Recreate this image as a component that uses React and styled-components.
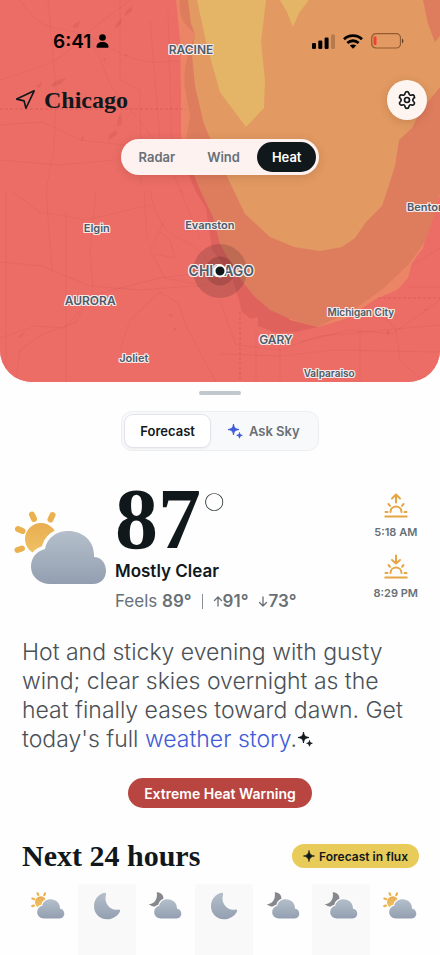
import React, { useState } from "react";
import styled, { createGlobalStyle } from "styled-components";
import { Navigation, Settings } from "lucide-react";

const sans = `Inter, "Open Sans", sans-serif`;
const serif = `"Liberation Serif", serif`;

const GlobalStyle = createGlobalStyle`
  * {
    box-sizing: border-box;
  }
  body {
    margin: 0;
    background: #fefefe;
    color: #11181c;
    font-family: ${sans};
  }
  button {
    font-family: inherit;
    border: 0;
    cursor: pointer;
  }
`;

// styled-components
const Page = styled.div`
  display: flex;
  flex-direction: column;
  height: 100vh;
  overflow: hidden;
`;

const MapPanel = styled.header`
  position: relative;
  flex: none;
  height: 40vh;
  min-height: 340px;
  overflow: hidden;
  background: #eb6d66;
  border-radius: 0 0 32px 32px;
`;

const MapArt = styled.svg`
  position: absolute;
  inset: 0;
  width: 100%;
  height: 100%;
`;

const MapControls = styled.div`
  position: relative;
  display: flex;
  flex-direction: column;
`;

const StatusBar = styled.div`
  display: flex;
  justify-content: space-between;
  align-items: center;
  height: 80px;
  padding: 2px 36px 0 53px;
  color: #000;
`;

const StatusGroup = styled.div`
  display: flex;
  align-items: center;
  gap: ${(props) => props.$gap}px;
`;

const Clock = styled.time`
  font-size: 19px;
  font-weight: 600;
`;

const PlaceBar = styled.div`
  display: flex;
  justify-content: space-between;
  align-items: center;
  height: 40px;
  padding: 0 13px 0 14px;
`;

const Place = styled.h1`
  display: flex;
  align-items: center;
  gap: 8px;
  margin: 0;
  font-family: ${serif};
  font-size: 24px;
  line-height: 28px;
  font-weight: 700;
`;

const RoundButton = styled.button`
  display: flex;
  align-items: center;
  justify-content: center;
  width: 40px;
  height: 40px;
  padding: 0;
  border-radius: 50%;
  background: #fef5f0;
  color: #11181c;
  box-shadow: 0 2px 10px rgba(90, 40, 20, 0.2);
`;

const LayerSwitch = styled.div`
  display: flex;
  align-self: center;
  gap: 2px;
  margin-top: 19px;
  padding: 3px;
  border-radius: 19px;
  background: #fdf2f0;
  box-shadow: 0 2px 10px rgba(90, 40, 20, 0.18);
`;

const LayerButton = styled.button`
  height: 30px;
  padding: 0 15px;
  border-radius: 15px;
  font-size: 13px;
  font-weight: 600;
  background: ${(props) => (props.$active ? "#11181c" : "transparent")};
  color: ${(props) => (props.$active ? "#fff" : "#687076")};
`;

const CityLabel = styled.span`
  position: absolute;
  left: ${(props) => props.$x}%;
  top: ${(props) => props.$y}%;
  transform: translate(-50%, -50%);
  font-size: ${(props) => props.$size || 11}px;
  font-weight: 600;
  white-space: nowrap;
  color: #4a5b6a;
  text-shadow: 1px 0 #fbe9e6, -1px 0 #fbe9e6, 0 1px #fbe9e6, 0 -1px #fbe9e6,
    1px 1px #fbe9e6, -1px -1px #fbe9e6, 1px -1px #fbe9e6, -1px 1px #fbe9e6;
`;

const Halo = styled.span`
  position: absolute;
  left: 50%;
  top: 71%;
  width: 54px;
  height: 54px;
  border-radius: 50%;
  transform: translate(-50%, -50%);
  background: radial-gradient(
    circle,
    rgba(70, 30, 30, 0.38) 0 14px,
    rgba(80, 40, 40, 0.22) 15px
  );
`;

const Dot = styled.span`
  position: absolute;
  left: 50%;
  top: 71%;
  width: 13px;
  height: 13px;
  border: 2px solid #fff;
  border-radius: 50%;
  transform: translate(-50%, -50%);
  background: #11181c;
`;

const Sheet = styled.main`
  flex: 1;
  display: flex;
  flex-direction: column;
`;

const Handle = styled.div`
  align-self: center;
  width: 42px;
  height: 4px;
  margin-top: 9px;
  border-radius: 2px;
  background: #c1c8cd;
`;

const Tabs = styled.div`
  display: flex;
  align-self: center;
  gap: 2px;
  margin-top: 16px;
  padding: 3px;
  border: 1px solid #eceef0;
  border-radius: 11px;
  background: #f8f9fa;
`;

const Tab = styled.button`
  display: flex;
  align-items: center;
  gap: 6px;
  height: 32px;
  padding: 0 15px;
  border-radius: 8px;
  font-size: 13px;
  font-weight: 600;
  background: ${(props) => (props.$active ? "#fff" : "transparent")};
  color: ${(props) => (props.$active ? "#11181c" : "#687076")};
  box-shadow: ${(props) =>
    props.$active ? "0 0 0 1px #e2e4ea, 0 1px 3px rgba(0, 0, 0, 0.1)" : "none"};
`;

const Current = styled.section`
  display: flex;
  margin-top: 31px;
  padding: 0 22px 0 14px;
`;

const MainIcon = styled.div`
  width: 94px;
  padding-top: 29px;
`;

const Reading = styled.div`
  flex: 1;
  padding-left: 7px;
`;

const Temperature = styled.div`
  display: flex;
  align-items: flex-start;
  font-family: ${serif};
  font-size: 86px;
  line-height: 74px;
  font-weight: 700;
`;

const Degree = styled.span`
  font-family: Lato, sans-serif;
  font-size: 64px;
  line-height: 66px;
  font-weight: 100;
`;

const Condition = styled.h2`
  margin: 3px 0 0;
  font-size: 17px;
  line-height: 24px;
  font-weight: 600;
`;

const Details = styled.div`
  display: flex;
  align-items: center;
  gap: 10px;
  margin-top: 6px;
  font-size: 17px;
  line-height: 24px;
  color: #687076;
`;

const Strong = styled.b`
  display: inline-flex;
  align-items: center;
  font-weight: 600;
`;

const Divider = styled.span`
  width: 1px;
  height: 15px;
  background: #889096;
`;

const SunTimes = styled.div`
  display: flex;
  flex-direction: column;
  align-items: center;
  gap: 13px;
  padding-top: 11px;
`;

const SunTime = styled.div`
  display: flex;
  flex-direction: column;
  align-items: center;
  gap: 6px;
  font-size: 11px;
  line-height: 17px;
  font-weight: 600;
  color: #687076;
`;

const Summary = styled.p`
  margin: 25px 22px 0;
  font-size: 23px;
  line-height: 29px;
  font-weight: 300;
  color: #4a5156;
`;

const StoryLink = styled.a`
  color: #3e5bd8;
  text-decoration: none;
`;

const Warning = styled.button`
  align-self: center;
  height: 30px;
  margin-top: 24px;
  padding: 0 16px;
  border-radius: 15px;
  background: #b94540;
  color: #fff;
  font-size: 14px;
  font-weight: 600;
`;

const HoursHeader = styled.div`
  display: flex;
  justify-content: space-between;
  align-items: center;
  height: 34px;
  margin-top: 31px;
  padding: 0 21px 0 22px;
`;

const HoursTitle = styled.h2`
  margin: 0;
  font-family: ${serif};
  font-size: 30px;
  line-height: 34px;
  font-weight: 700;
`;

const FluxBadge = styled.button`
  display: flex;
  align-items: center;
  gap: 4px;
  height: 24px;
  padding: 0 11px;
  border-radius: 12px;
  background: #e9cb59;
  color: #11181c;
  font-size: 12px;
  font-weight: 600;
`;

const Hours = styled.div`
  flex: 1;
  display: grid;
  grid-template-columns: repeat(7, 1fr);
  margin-top: 11px;
  padding: 0 11px 0 19px;
`;

const Hour = styled.div`
  display: flex;
  justify-content: center;
  align-items: flex-start;
  padding-top: 8px;
  border-radius: 3px 3px 0 0;
  background: ${(props) => (props.$shaded ? "#f9f9f9" : "transparent")};
`;

const cities = [
  { name: "RACINE", x: 43.4, y: 12.7, size: 12 },
  { name: "Elgin", x: 22, y: 59.8 },
  { name: "Evanston", x: 47.7, y: 58.9 },
  { name: "AURORA", x: 20.5, y: 78.5, size: 12 },
  { name: "Joliet", x: 30.4, y: 93.7 },
  { name: "GARY", x: 62.7, y: 88.8, size: 12 },
  { name: "Michigan City", x: 82, y: 81.8, size: 10 },
  { name: "Valparaiso", x: 74.8, y: 97.6, size: 10 },
  { name: "Benton", x: 96.8, y: 54.3 },
  { name: "CHICAGO", x: 50.3, y: 70.6, size: 14 },
];

const hours = ["sun", "moon", "moonCloud", "moon", "moonCloud", "moonCloud", "sun"];

function HeatMap() {
  return (
    <MapArt viewBox="0 0 440 382" preserveAspectRatio="xMidYMid slice" aria-hidden="true">
      <rect width="440" height="382" fill="#eb6d66" />
      <path
        fill="#df625d"
        d="M181 138L186 168L196 192L206 208L212 250L230 272L239 300L242 312L251 319L258 317L258 326L276 333L296 332L318 327L270 270L210 160Z"
      />
      <path
        fill="#eb8565"
        d="M176 0L180 40L181 90L181 136L186 158L230 230L290 320L318 327L345 319L376 299L397 290L408 278L412 263L423 248L430 220L440 196V0Z"
      />
      <path
        fill="#de7d5e"
        d="M180 0Q178 18 187 26L195 34L188 54Q182 74 186 94L190 116L186 140L188 160L200 190L213 217L220 244L238 276L254 296L270 310L290 319L317 327L352 311L384 288L409 264L426 240L434 216L440 192V0Z"
      />
      <path
        fill="#e29a62"
        d="M188 0L191 24L195 34L192 54L195 86L204 124L222 166L245 214L270 237L294 247L320 251L342 247L355 238L366 222L382 206L388 188L395 166L399 140L412 128L420 112L440 87V36L435 42L428 24L423 0Z"
      />
      <path fill="#e4b566" d="M197 0L207 46L220 92L246 127L264 108L265 80L261 42L266 0Z" />
      <path fill="#e4b566" d="M280 0L287 12L293 27L299 13L309 0Z" />
      <g fill="none" stroke="#b84743" strokeOpacity="0.13" strokeWidth="1">
        <path d="M0 80C30 70 55 65 75 45S105 20 130 0M20 0C40 30 55 28 76 32S112 54 140 60S166 58 180 62" />
        <path d="M48 0L56 90L54 150L46 190L52 270M90 40Q101 58 106 74T130 110T160 150T184 196" />
        <path d="M0 125L42 122L80 140L124 145L180 170M0 160L60 165L115 160M10 190L40 212L86 220L150 205" />
        <path d="M120 0V80L140 90L141 185M150 20L160 140M168 10L172 160" />
        <path d="M0 262L42 266L90 286L140 290L208 285M6 192V382M66 212V382M144 190L147 240" />
        <path d="M96 192L90 250L93 290L76 322L43 334L20 350L16 382M150 190Q158 232 182 240T216 280" />
        <path d="M0 338L36 326L65 328L93 295L160 278L205 272M120 350L130 320L160 292L178 303L188 330L216 382" />
        <path d="M165 220L150 250L165 278L196 284M160 232L170 240L175 258L155 254M180 190L200 238" />
        <path d="M220 300L236 345L280 350L320 336L440 325M220 354L280 356L334 350L440 352M256 330V382M280 340V382M360 330V382" />
        <path d="M380 310L396 330L400 360L424 382M300 342L350 330L392 334L440 300M414 264L440 248M408 287H440" />
        <path strokeDasharray="3 2" strokeOpacity="0.35" d="M0 109H186M240 312V382M378 298H440" />
      </g>
      <g fill="#b84743" fillOpacity="0.22">
        <path d="M127 10L133 6L131 12L124 16ZM117 22L122 18L121 24L115 29ZM74 24L80 21L78 27L73 28ZM52 84L58 80L66 78L61 84L52 87ZM36 86L42 82L40 88Z" />
        <path d="M118 117L121 113L122 124L117 127ZM110 134L116 130L117 135L108 140ZM81 138L84 135L82 142ZM103 58L106 58L104 62ZM124 55L128 54L126 57Z" />
        <path d="M19 336L25 332L23 335L19 338ZM168 314L173 315L172 317ZM387 330L390 332L387 335ZM174 328L177 328L175 331ZM424 309L428 309L425 311Z" />
      </g>
    </MapArt>
  );
}

function Sparkles({ size, color }) {
  return (
    <svg width={size} height={size} viewBox="0 0 16 16" fill={color} aria-hidden="true">
      <path d="M6.5 1C7 4.700 8 5.800 12 6.500C8 7.200 7 8.300 6.500 12C6 8.300 5 7.200 1 6.500C5 5.800 6 4.700 6.500 1Z" stroke={color} strokeLinejoin="round" />
      <path d="M12.500 9.500C12.800 11.300 13.300 11.900 15.300 12.300C13.300 12.700 12.800 13.300 12.500 15.200C12.200 13.300 11.700 12.700 9.700 12.300C11.700 11.900 12.200 11.300 12.500 9.500Z" stroke={color} strokeLinejoin="round" strokeWidth="0.8" />
    </svg>
  );
}

function SunIcon({ down }) {
  return (
    <svg width="24" height="25" viewBox="0 0 24 25" fill="none" stroke="#e6a545" strokeWidth="2" strokeLinecap="round" strokeLinejoin="round" aria-hidden="true">
      <path d={down ? "M12 1.500V9M8 6L12 9.500L16 6" : "M12 9.500V2M8 5.500L12 1.500L16 5.500"} />
      <path d="M6.500 19C6.500 11.800 17.500 11.800 17.500 19" />
      <path d="M1.500 19H3.500M20.500 19H22.500M4.500 11L6 12.800M19.500 11L18 12.800" />
      <path d="M0.500 23.500H23.500" strokeLinecap="butt" />
    </svg>
  );
}

const CLOUD =
  "M36 73C26 73 17 66 17 56C17 46 23 40 31 38C33 27 42 20 54 20C69 20 80 30 80 44V46C87 46 92 52 92 60C92 67 87 73 79 73Z";

function WeatherIcon({ kind, width }) {
  const id = "sky-" + kind + width;
  return (
    <svg width={width} viewBox="0 0 94 75" aria-hidden="true">
      <defs>
        <linearGradient id={id + "-cloud"} x1="0" y1="0" x2="0" y2="1">
          <stop offset="0" stopColor="#b5bfcb" />
          <stop offset="1" stopColor="#939fb1" />
        </linearGradient>
        <linearGradient id={id + "-sun"} x1="0" y1="0" x2="0" y2="1">
          <stop offset="0" stopColor="#e9ad51" />
          <stop offset="1" stopColor="#efc364" />
        </linearGradient>
      </defs>
      {kind === "sun" && (
        <>
          <circle cx="27" cy="28" r="16" fill={`url(#${id}-sun)`} />
          <path stroke="#ebb14f" strokeWidth="6" strokeLinecap="round" d="M18 3.500L20 8M38.500 4L36.500 8.500M4 18L8.500 20M3.500 39L8 37.500" />
        </>
      )}
      {kind === "moonCloud" && (
        <path fill="#85888f" d="M24 1C36 0 46 11 42 24C37 40 17 46 2 34C17 34 28 20 24 1Z" />
      )}
      <path d={CLOUD} fill="#fefefe" stroke="#fefefe" strokeWidth="7" />
      <path d={CLOUD} fill={`url(#${id}-cloud)`} />
    </svg>
  );
}

function MoonIcon() {
  return (
    <svg width="28" height="28" viewBox="0 0 28 28" aria-hidden="true">
      <defs>
        <linearGradient id="moon" x1="0" y1="0" x2="0" y2="1">
          <stop offset="0" stopColor="#b5bfcb" />
          <stop offset="1" stopColor="#939fb1" />
        </linearGradient>
      </defs>
      <path
        fill="url(#moon)"
        d="M9.500 1.300C12 0 13.800 0.700 13 2.800C10.500 11 17 19 25 17.700C27.300 17.300 27.800 18.500 26.600 20.200C23.500 25 19 27.300 14 27.300C6.500 27.300 1 21.700 1 14.300C1 8.300 4.500 3.500 9.500 1.300Z"
      />
    </svg>
  );
}

function Arrow({ down }) {
  return (
    <svg width="10" height="11" viewBox="0 0 10 11" fill="none" stroke="#687076" strokeWidth="1.300" strokeLinecap="round" strokeLinejoin="round" aria-hidden="true">
      <path d={down ? "M5 1V10M1.500 6.500L5 10L8.500 6.500" : "M5 10V1M1.500 4.500L5 1L8.500 4.500"} />
    </svg>
  );
}

function StatusIcons() {
  return (
    <StatusGroup $gap={8}>
      <svg width="23" height="15" viewBox="0 0 23 15" aria-hidden="true">
        <rect x="0" y="9" width="4" height="6" rx="1.200" />
        <rect x="6.300" y="6.500" width="4" height="8.500" rx="1.200" />
        <rect x="12.600" y="3.500" width="4" height="11.500" rx="1.200" />
        <rect x="19" y="0.500" width="4" height="14.500" rx="1.200" opacity="0.2" />
      </svg>
      <svg width="20" height="15" viewBox="0 0 20 15" fill="none" stroke="#000" strokeWidth="2.800" aria-hidden="true">
        <path d="M1 5.200C6 0.500 14 0.500 19 5.200" />
        <path d="M4.400 9C7.600 6 12.400 6 15.600 9" />
        <path d="M10 14.800L6.800 11.600C8.600 10 11.400 10 13.200 11.600Z" fill="#000" stroke="none" />
      </svg>
      <svg width="33" height="16" viewBox="0 0 33 16" aria-hidden="true">
        <rect x="0.700" y="0.700" width="28.800" height="14.300" rx="4.300" fill="none" stroke="#5c3010" strokeOpacity="0.6" strokeWidth="1.200" />
        <rect x="2.500" y="3.500" width="3" height="8.500" rx="1" fill="#ee4238" />
        <path d="M31 5.500C32.800 6.200 32.800 9.600 31 10.300Z" fillOpacity="0.6" />
      </svg>
    </StatusGroup>
  );
}

export default function App() {
  const [layer, setLayer] = useState("Heat");
  const [tab, setTab] = useState("Forecast");

  return (
    <Page>
      <GlobalStyle />
      <MapPanel>
        <HeatMap />
        <Halo />
        {cities.map((city) => (
          <CityLabel key={city.name} $x={city.x} $y={city.y} $size={city.size}>
            {city.name}
          </CityLabel>
        ))}
        <Dot />
        <MapControls>
          <StatusBar>
            <StatusGroup $gap={5}>
              <Clock>6:41</Clock>
              <svg width="13" height="14" viewBox="0 0 13 14" aria-hidden="true">
                <circle cx="6.500" cy="3.500" r="3.300" />
                <path d="M0.500 13C0.500 9.500 3 8 6.500 8S12.500 9.500 12.500 13Q12.500 13.700 11.800 13.700H1.200Q0.500 13.700 0.500 13Z" />
              </svg>
            </StatusGroup>
            <StatusIcons />
          </StatusBar>
          <PlaceBar>
            <Place>
              <Navigation size={22} strokeWidth={1.8} />
              Chicago
            </Place>
            <RoundButton type="button" aria-label="Settings">
              <Settings size={20} strokeWidth={2} />
            </RoundButton>
          </PlaceBar>
          <LayerSwitch>
            {["Radar", "Wind", "Heat"].map((name) => (
              <LayerButton key={name} type="button" $active={layer === name} onClick={() => setLayer(name)}>
                {name}
              </LayerButton>
            ))}
          </LayerSwitch>
        </MapControls>
      </MapPanel>

      <Sheet>
        <Handle />
        <Tabs>
          <Tab type="button" $active={tab === "Forecast"} onClick={() => setTab("Forecast")}>
            Forecast
          </Tab>
          <Tab type="button" $active={tab === "Ask Sky"} onClick={() => setTab("Ask Sky")}>
            <Sparkles size={16} color="#3e5bd8" />
            Ask Sky
          </Tab>
        </Tabs>

        <Current>
          <MainIcon>
            <WeatherIcon kind="sun" width={94} />
          </MainIcon>
          <Reading>
            <Temperature>
              87<Degree>°</Degree>
            </Temperature>
            <Condition>Mostly Clear</Condition>
            <Details>
              <span>
                Feels <Strong>89°</Strong>
              </span>
              <Divider />
              <Strong>
                <Arrow />
                91°
              </Strong>
              <Strong>
                <Arrow down />
                73°
              </Strong>
            </Details>
          </Reading>
          <SunTimes>
            <SunTime>
              <SunIcon />
              5:18 AM
            </SunTime>
            <SunTime>
              <SunIcon down />
              8:29 PM
            </SunTime>
          </SunTimes>
        </Current>

        <Summary>
          Hot and sticky evening with gusty wind; clear skies overnight as the
          heat finally eases toward dawn. Get today's full{" "}
          <StoryLink href="#story">weather story</StoryLink>.
          <Sparkles size={16} color="#11181c" />
        </Summary>

        <Warning type="button">Extreme Heat Warning</Warning>

        <HoursHeader>
          <HoursTitle>Next 24 hours</HoursTitle>
          <FluxBadge type="button">
            <svg width="12" height="12" viewBox="0 0 12 12" aria-hidden="true">
              <path fill="#11181c" stroke="#11181c" strokeWidth="0.600" strokeLinejoin="round" d="M6 0.400C6.500 4 8 5.500 11.600 6C8 6.500 6.500 8 6 11.600C5.500 8 4 6.500 0.400 6C4 5.500 5.500 4 6 0.400Z" />
            </svg>
            Forecast in flux
          </FluxBadge>
        </HoursHeader>
        <Hours>
          {hours.map((kind, i) => (
            <Hour key={i} $shaded={i % 2 === 1}>
              {kind === "moon" ? <MoonIcon /> : <WeatherIcon kind={kind} width={34} />}
            </Hour>
          ))}
        </Hours>
      </Sheet>
    </Page>
  );
}
